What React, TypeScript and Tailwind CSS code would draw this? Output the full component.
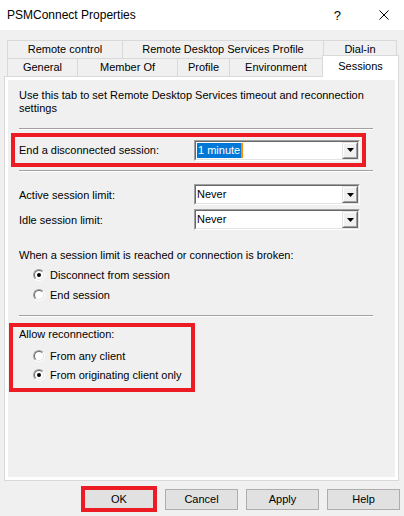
import React from "react";

function Radio({ checked }: { checked?: boolean }) {
  return (
    <div className="w-[12px] h-[12px] rounded-full border border-t-[#a0a0a0] border-l-[#a0a0a0] border-r-white border-b-white shrink-0">
      <div className="w-full h-full rounded-full border border-t-[#696969] border-l-[#696969] border-r-[#e3e3e3] border-b-[#e3e3e3] bg-white flex items-center justify-center">
        {checked ? <div className="w-[4px] h-[4px] rounded-full bg-black" /> : null}
      </div>
    </div>
  );
}

function Combo({ children }: { children: React.ReactNode }) {
  return (
    <div className="w-[166px] h-[21px] border border-t-[#a0a0a0] border-l-[#a0a0a0] border-r-white border-b-white shrink-0">
      <div className="w-full h-full border border-t-[#696969] border-l-[#696969] border-r-[#e3e3e3] border-b-[#e3e3e3] bg-white flex items-center">
        <div className="flex-1 flex items-center h-full pl-[1px] overflow-hidden">{children}</div>
        <div className="w-[16px] h-full border border-t-[#e3e3e3] border-l-[#e3e3e3] border-r-[#696969] border-b-[#696969]">
          <div className="w-full h-full border border-t-white border-l-white border-r-[#a0a0a0] border-b-[#a0a0a0] bg-[#f0f0f0] flex items-center justify-center">
            <svg width="7" height="4" viewBox="0 0 7 4">
              <path d="M0 0 H7 L3.5 4 Z" fill="#000" />
            </svg>
          </div>
        </div>
      </div>
    </div>
  );
}

function Separator() {
  return <div className="w-[354px] h-[2px] border-t border-t-[#a0a0a0] border-b border-b-white" />;
}

function Button({ label }: { label: string }) {
  return (
    <div className="w-[73px] h-[21px] border border-[#adadad] bg-[#e1e1e1] flex items-center justify-center">
      {label}
    </div>
  );
}

export default function App() {
  return (
    <div className="w-[404px] h-[516px] bg-[#f0f0f0] font-['Liberation_Sans',Arial,sans-serif] text-[11px] text-black overflow-hidden leading-[13px]">
      {/* Title bar */}
      <div className="h-[30px] bg-white flex items-center">
        <span className="ml-[7px] text-[12px]">PSMConnect Properties</span>
        <span className="ml-auto text-[13px] mr-[38px]">?</span>
        <svg width="10" height="10" viewBox="0 0 10 10" className="mr-[15px]">
          <path d="M0.5 0.5 L9.5 9.5 M9.5 0.5 L0.5 9.5" stroke="#000" strokeWidth="1" />
        </svg>
      </div>

      {/* Tabs */}
      <div className="pt-[10px]">
        <div className="flex ml-[7px] h-[18px]">
          <div className="w-[115px] border-t border-l border-[#d9d9d9] flex items-center justify-center">Remote control</div>
          <div className="w-[201px] border-t border-l border-[#d9d9d9] flex items-center justify-center">Remote Desktop Services Profile</div>
          <div className="w-[74px] border-t border-l border-r border-[#d9d9d9] flex items-center justify-center">Dial-in</div>
        </div>
        <div className="flex ml-[7px] h-[18px] items-end relative z-10">
          <div className="w-[70px] h-[18px] border-t border-l border-[#d9d9d9] flex items-center justify-center">General</div>
          <div className="w-[100px] h-[18px] border-t border-l border-[#d9d9d9] flex items-center justify-center">Member Of</div>
          <div className="w-[52px] h-[18px] border-t border-l border-[#d9d9d9] flex items-center justify-center">Profile</div>
          <div className="w-[93px] h-[18px] border-t border-l border-[#d9d9d9] flex items-center justify-center">Environment</div>
          <div className="w-[77px] h-[22px] mb-[-1px] bg-white border-t border-l border-r border-[#d9d9d9] flex items-start justify-center pt-[4px]">Sessions</div>
        </div>

        {/* Panel */}
        <div className="ml-[4px] w-[395px] h-[405px] border border-[#d9d9d9]">
          <div className="w-full h-full border-[3px] border-white bg-[#f0f0f0] pl-[11px] flex flex-col">
            <div className="mt-[9px] w-[348px]">
              Use this tab to set Remote Desktop Services timeout and reconnection settings
            </div>
            <div className="mt-[13px]"><Separator /></div>

            <div className="mt-[3px] ml-[-8px] w-[355px] h-[34px] border-4 border-[#ed1c24] flex items-center justify-between pl-[4px] pr-[2px]">
              <span>End a disconnected session:</span>
              <Combo>
                <span className="bg-[#0078d7] text-white px-[1px] leading-[15px]">1 minute</span>
                <span className="w-[2px] h-[15px] bg-[#ff8c00]" />
              </Combo>
            </div>

            <div className="mt-[3px]"><Separator /></div>

            <div className="mt-[12px] h-[21px] flex items-center">
              <span className="w-[175px] pt-[2px]">Active session limit:</span>
              <Combo><span>Never</span></Combo>
            </div>
            <div className="mt-[4px] h-[21px] flex items-center">
              <span className="w-[175px] pt-[2px]">Idle session limit:</span>
              <Combo><span>Never</span></Combo>
            </div>

            <div className="mt-[19px]">When a session limit is reached or connection is broken:</div>
            <div className="mt-[5px] h-[16px] flex items-center pl-[14px] gap-[5px]">
              <Radio checked />
              <span>Disconnect from session</span>
            </div>
            <div className="mt-[4px] h-[16px] flex items-center pl-[14px] gap-[5px]">
              <Radio />
              <span>End session</span>
            </div>

            <div className="mt-[12px]"><Separator /></div>

            <div className="mt-[6px] ml-[-10px] w-[186px] h-[69px] border-4 border-[#ed1c24] pl-[6px] flex flex-col">
              <div className="mt-[1px]">Allow reconnection:</div>
              <div className="mt-[7px] h-[16px] flex items-center pl-[14px] gap-[5px]">
                <Radio />
                <span>From any client</span>
              </div>
              <div className="mt-[3px] h-[16px] flex items-center pl-[14px] gap-[5px]">
                <Radio checked />
                <span>From originating client only</span>
              </div>
            </div>
          </div>
        </div>

        {/* Buttons */}
        <div className="mt-[5px] h-[26px] flex items-center justify-end pr-[4px] gap-[8px]">
          <div className="w-[76px] h-[26px] border-4 border-[#ed1c24] bg-[#e1e1e1] flex items-center justify-center">OK</div>
          <Button label="Cancel" />
          <Button label="Apply" />
          <Button label="Help" />
        </div>
      </div>
    </div>
  );
}
